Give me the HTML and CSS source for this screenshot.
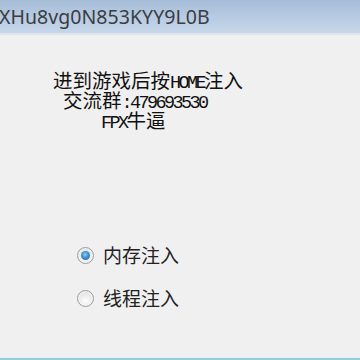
FILE: index.html
```html
<!DOCTYPE html>
<html>
<head>
<meta charset="utf-8">
<link rel="stylesheet" href="styles.css">
</head>
<body>
<div class="window">
  <div class="titlebar"><span class="title">XHu8vg0N853KYY9L0B</span></div>
  <div class="content">
    <div class="info">
      <div class="line">进到游戏后按<span class="mono">HOME</span>注入</div>
      <div class="line l2">交流群<span class="mono">:479693530</span></div>
      <div class="line l3"><span class="mono">FPX</span>牛逼</div>
    </div>
    <div class="options">
      <label class="opt"><span class="radio checked"></span><span class="opt-text">内存注入</span></label>
      <label class="opt"><span class="radio"></span><span class="opt-text">线程注入</span></label>
    </div>
  </div>
  <div class="edge"></div>
</div>
</body>
</html>
```
FILE: styles.css
```css
html, body {
  margin: 0;
  padding: 0;
}
body {
  width: 360px;
  height: 360px;
  overflow: hidden;
  background: #f0f0f0;
}
.window {
  display: flex;
  flex-direction: column;
  height: 360px;
}
.titlebar {
  height: 33px;
  background: linear-gradient(#a6bdd8, #c7d7ea);
  border-bottom: 2px solid #dde6ef;
  box-sizing: content-box;
  flex: none;
}
.title {
  display: block;
  margin-left: -1px;
  font-family: "Noto Sans", "Open Sans", sans-serif;
  font-size: 19.5px;
  line-height: 33px;
  color: #3a3d42;
  letter-spacing: 0.05px;
}
.content {
  flex: 1;
}
.info {
  margin-top: 35px;
  padding-left: 53px;
  font-family: "Noto Sans CJK SC", sans-serif;
  font-size: 19.5px;
  line-height: 20px;
  color: #111;
}
.line {
  white-space: nowrap;
  height: 20px;
}
.l2 { padding-left: 10px; }
.l3 { padding-left: 48px; }
.mono {
  font-family: "Liberation Mono", monospace;
  font-size: 18.5px;
  letter-spacing: -2.6px;
  line-height: 0;
}
.options {
  margin-top: 115px;
  padding-left: 77px;
  display: flex;
  flex-direction: column;
  gap: 23px;
}
.opt {
  display: flex;
  align-items: center;
  height: 20px;
  gap: 9px;
}
.radio {
  width: 15px;
  height: 15px;
  border-radius: 50%;
  border: 1px solid #9a9b9c;
  background: radial-gradient(circle at 50% 65%, #fdfdfd 0%, #e8e8e8 60%, #d2d2d2 100%);
  box-shadow: inset 0 0 0 1px #f6f6f6;
  position: relative;
  flex: none;
}
.radio.checked::after {
  content: "";
  position: absolute;
  left: 3px;
  top: 3px;
  width: 9px;
  height: 9px;
  border-radius: 50%;
  background: radial-gradient(circle at 45% 40%, #8fd0f5 0%, #3d8fd1 45%, #1d5c9c 100%);
}
.opt-text {
  font-family: "Noto Sans CJK SC", sans-serif;
  font-size: 19px;
  line-height: 20px;
  color: #222;
}
.edge {
  height: 2px;
  border-top: 1px solid #e3eff6;
  background: #93cfd6;
  flex: none;
}
```
